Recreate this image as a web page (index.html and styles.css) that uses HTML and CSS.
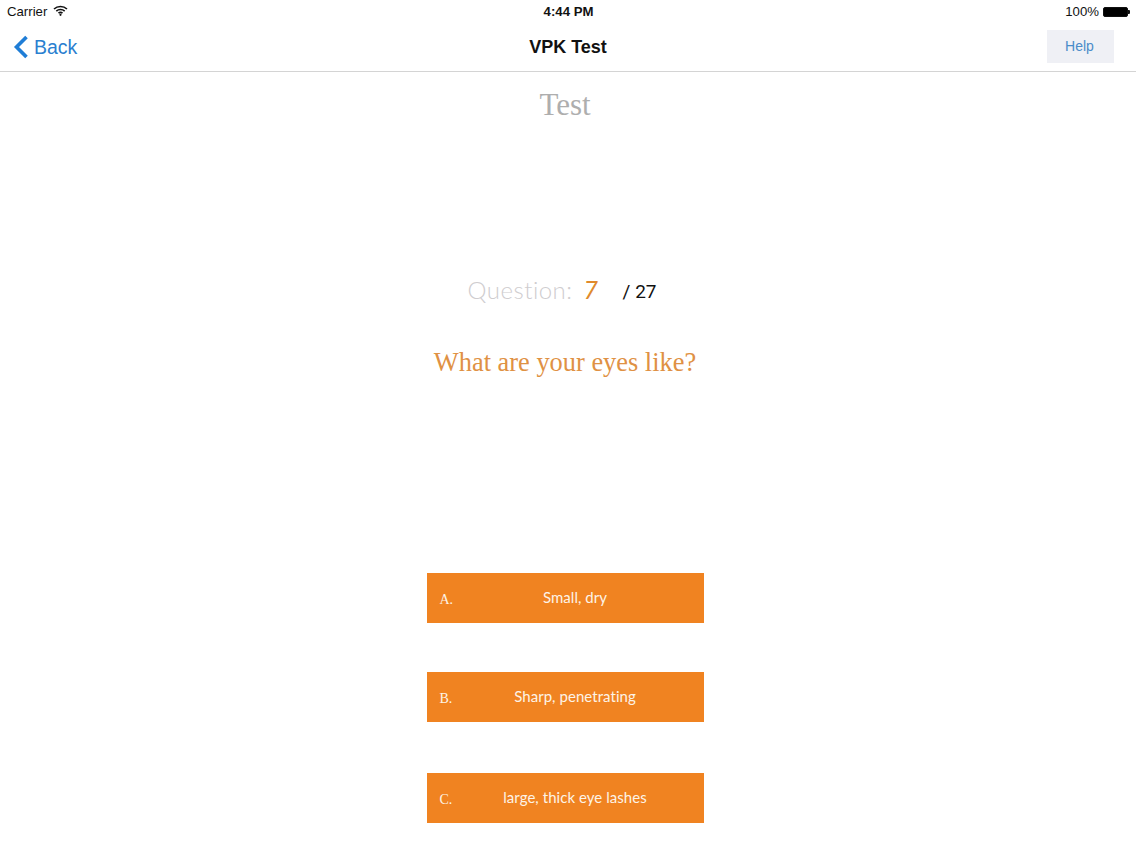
FILE: index.html
```html
<!DOCTYPE html>
<html lang="en">
<head>
  <meta charset="UTF-8" />
  <title>VPK Test</title>
  <link rel="stylesheet" href="styles.css">
</head>
<body>
  <div class="status-bar">
    <div class="status-left">
      <span>Carrier</span>
      <svg class="wifi" width="15" height="11" viewBox="0 0 15 11">
        <path d="M1 4 A9.5 9.5 0 0 1 14 4" />
        <path d="M3.3 6.2 A6.2 6.2 0 0 1 11.7 6.2" />
        <path d="M5.5 8.2 A3 3 0 0 1 9.5 8.2" />
        <circle cx="7.5" cy="9.8" r="1.1" />
      </svg>
    </div>
    <div class="status-time">4:44 PM</div>
    <div class="status-right">
      <span>100%</span>
      <div class="battery"><div class="battery-fill"></div></div>
      <div class="battery-tip"></div>
    </div>
  </div>

  <div class="nav-bar">
    <div class="back">
      <svg width="16" height="24" viewBox="0 0 16 24">
        <path d="M13.5 2 L3.5 12 L13.5 22" />
      </svg>
      <span>Back</span>
    </div>
    <div class="nav-title">VPK Test</div>
    <button class="help-button">Help</button>
  </div>

  <div class="content">
    <div class="page-title">Test</div>

    <div class="counter">
      <span class="counter-label">Question:</span>
      <span class="counter-current">7</span>
      <span class="counter-total">/ 27</span>
    </div>

    <div class="question">What are your eyes like?</div>

    <div class="answers">
      <div class="answer">
        <span class="answer-letter">A.</span>
        <span class="answer-text">Small, dry</span>
      </div>
      <div class="answer">
        <span class="answer-letter">B.</span>
        <span class="answer-text">Sharp, penetrating</span>
      </div>
      <div class="answer answer-last">
        <span class="answer-letter">C.</span>
        <span class="answer-text">large, thick eye lashes</span>
      </div>
    </div>
  </div>
</body>
</html>
```

FILE: styles.css
```css
* {
  box-sizing: border-box;
  margin: 0;
  padding: 0;
}

body {
  width: 1136px;
  height: 852px;
  overflow: hidden;
  background: #fff;
  font-family: 'Liberation Sans', Arial, sans-serif;
}

/* Status bar */
.status-bar {
  height: 23px;
  padding: 0 6px 0 7px;
  display: grid;
  grid-template-columns: 1fr auto 1fr;
  align-items: center;
  font-size: 13.2px;
  color: #111;
}

.status-left {
  display: flex;
  align-items: center;
  gap: 6px;
}

.wifi {
  margin-top: -3px;
}

.wifi path {
  fill: none;
  stroke: #111;
  stroke-width: 1.6;
}

.wifi circle {
  fill: #111;
}

.status-time {
  font-weight: bold;
}

.status-right {
  display: flex;
  align-items: center;
  justify-content: flex-end;
}

.status-right span {
  margin-right: 4px;
}

.battery {
  width: 25px;
  height: 10px;
  border: 1px solid #111;
  border-radius: 2px;
  background: #000;
}

.battery-tip {
  width: 2px;
  height: 4px;
  background: #111;
  border-radius: 0 1px 1px 0;
}

/* Nav bar */
.nav-bar {
  height: 49px;
  border-bottom: 1px solid #d4d4d4;
  padding: 0 22px 0 13px;
  display: grid;
  grid-template-columns: 1fr auto 1fr;
  align-items: center;
}

.back {
  display: flex;
  align-items: center;
  gap: 5px;
  color: #2a7fd0;
  font-size: 19.5px;
}

.back svg {
  fill: none;
  stroke: #1f7dd6;
  stroke-width: 3.6;
}

.nav-title {
  margin-left: 9px;
  font-size: 18px;
  font-weight: bold;
  color: #111;
}

.help-button {
  justify-self: end;
  width: 67px;
  height: 33px;
  margin-top: -2px;
  padding-right: 2px;
  border: none;
  background: #eff0f5;
  color: #4a8cc9;
  font-family: 'Liberation Sans', Arial, sans-serif;
  font-size: 14px;
}

/* Main content */
.content {
  display: flex;
  flex-direction: column;
  align-items: center;
  padding-right: 6px;
}

.page-title {
  margin-top: 15px;
  font-family: 'Liberation Serif', Georgia, serif;
  font-size: 31px;
  line-height: 36px;
  color: #aeaeae;
}

.counter {
  margin-top: 146px;
  margin-right: 6px;
  height: 40px;
  display: flex;
  align-items: center;
  color: #111;
}

.counter-label {
  font-family: Lato, sans-serif;
  font-weight: 300;
  font-size: 24px;
  letter-spacing: 0.5px;
  color: #cfcdcf;
}

.counter-current {
  margin-left: 11px;
  width: 39px;
  font-family: Lato, sans-serif;
  font-style: italic;
  font-size: 25px;
  color: #e08a2c;
}

.counter-total {
  font-family: Roboto, sans-serif;
  font-size: 19px;
  margin-top: 5px;
}

.question {
  margin-top: 37px;
  font-family: 'Liberation Serif', Georgia, serif;
  font-size: 26.4px;
  line-height: 32px;
  color: #df9144;
}

.answers {
  margin-top: 195px;
  width: 277px;
  display: flex;
  flex-direction: column;
  gap: 49px;
}

.answer {
  height: 50px;
  background: #f08321;
  color: #fdf3e7;
  position: relative;
  display: flex;
  align-items: center;
  justify-content: center;
  padding-left: 20px;
}

.answer-last {
  margin-top: 2px;
}

.answer-letter {
  position: absolute;
  left: 13px;
  top: 19px;
  font-family: 'Liberation Serif', Georgia, serif;
  font-size: 14px;
}

.answer-text {
  margin-top: -3px;
  font-family: Lato, sans-serif;
  font-size: 15px;
  letter-spacing: 0.05px;
}
```
